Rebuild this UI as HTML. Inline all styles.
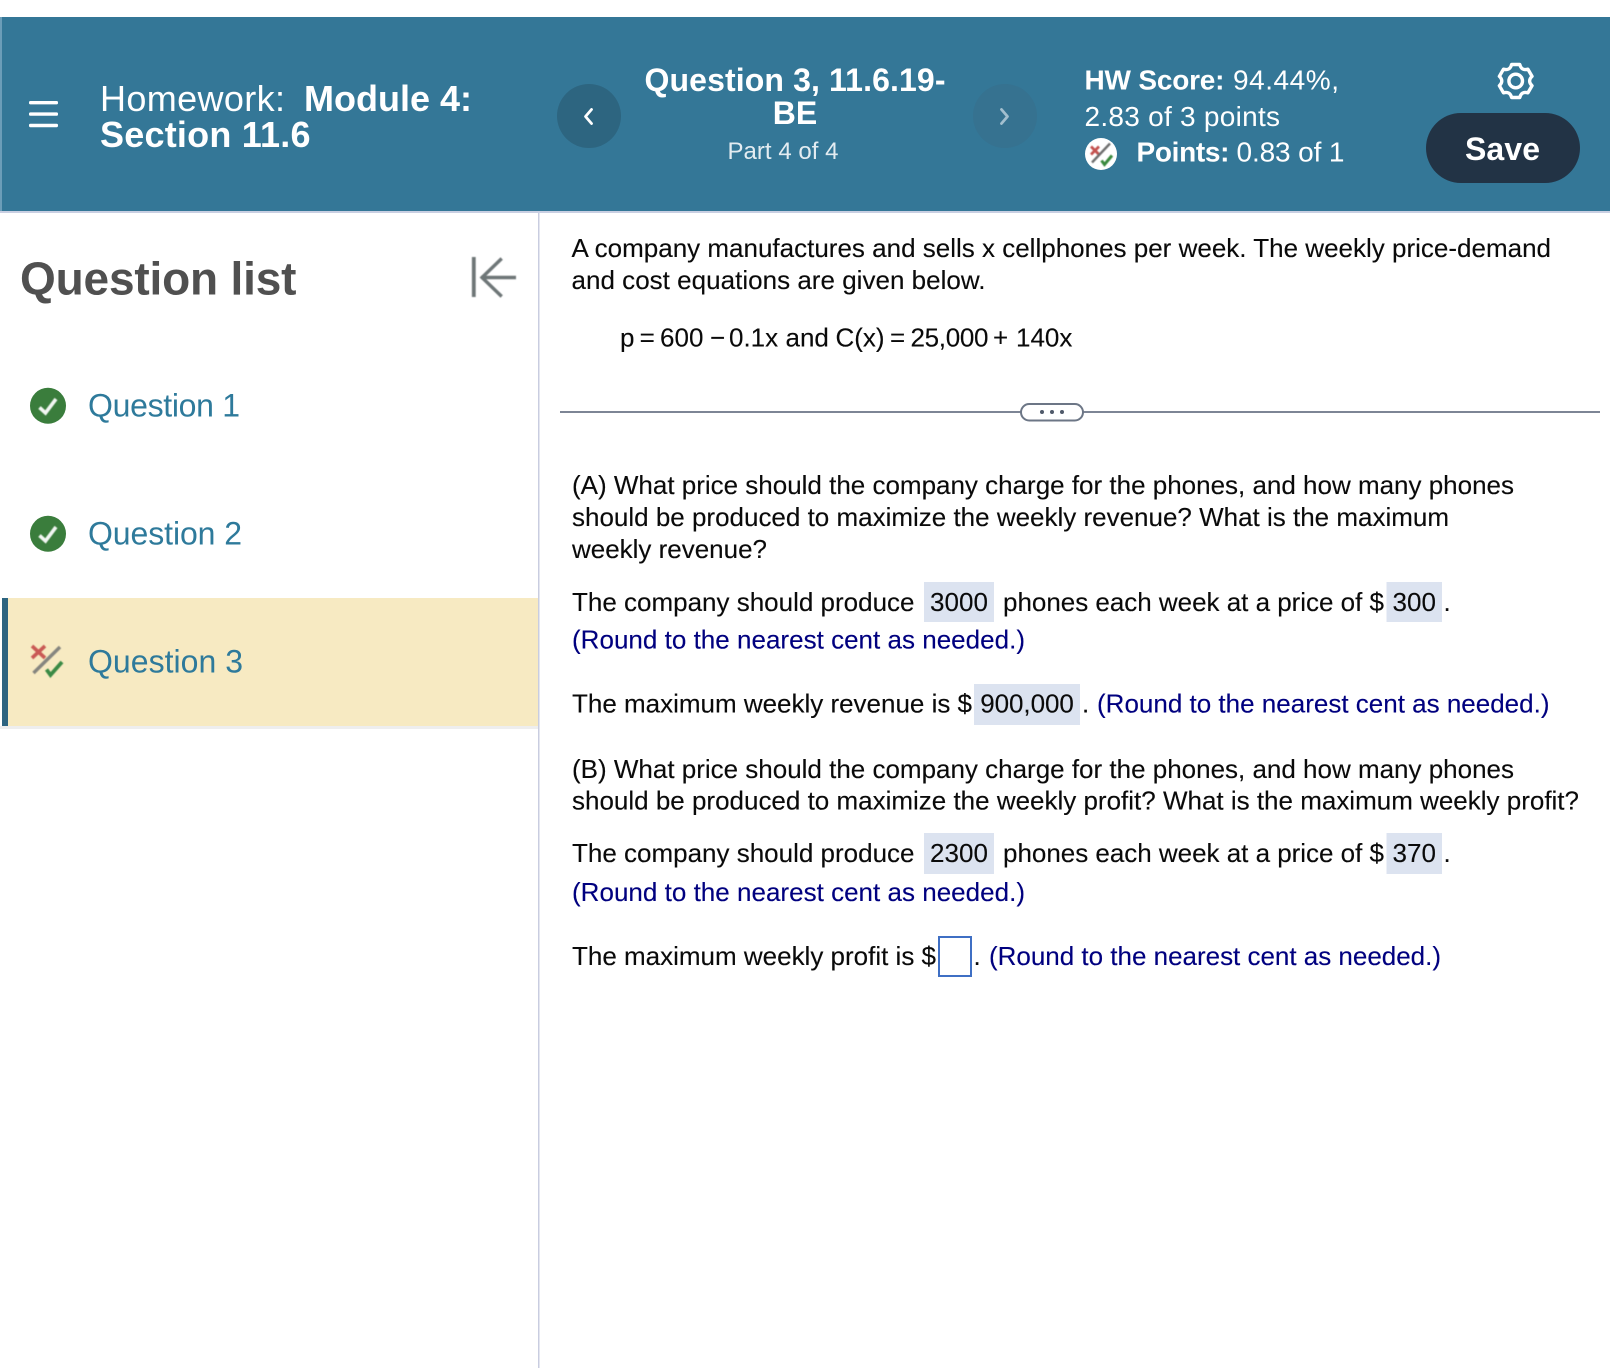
<!DOCTYPE html>
<html lang="en">
<head>
<meta charset="utf-8">
<title>Homework: Module 4: Section 11.6</title>
<style>
html,body{margin:0;padding:0;background:#fff;width:1610px;height:1368px;overflow:hidden}
svg{display:block;position:absolute;left:0;top:0}
text{font-family:"Liberation Sans",Arial,sans-serif;white-space:pre}
.b{font-weight:700}
.h{fill:#fff}
.q{font-size:26px;fill:#0a0a0a;stroke:#0a0a0a;stroke-width:.12}
.n{font-size:26px;fill:#00007f;stroke:#00007f;stroke-width:.12}
.box{fill:#dce3f0}
.l{font-size:32px;fill:#2e7a9b}
.soft{filter:blur(.45px)}
</style>
</head>
<body>
<svg width="1610" height="1368" viewBox="0 0 1610 1368" xmlns="http://www.w3.org/2000/svg">
  <rect width="1610" height="1368" fill="#fff"/>

  <!-- Header -->
  <rect x="0" y="17" width="1610" height="194" fill="#347797"/>
  <rect x="0" y="17" width="2" height="194" fill="#6c9db8"/>
  <rect x="0" y="211" width="1610" height="2" fill="#c9cfe2"/>

  <g fill="#fff">
    <rect x="29" y="101" width="29" height="3.4" rx="1.4"/>
    <rect x="29" y="112.4" width="29" height="3.4" rx="1.4"/>
    <rect x="29" y="123.8" width="29" height="3.4" rx="1.4"/>
  </g>

  <text class="h" x="100" y="111" font-size="36" textLength="185">Homework:</text>
  <text class="h b" x="304" y="111" font-size="36" textLength="168">Module 4:</text>
  <text class="h b" x="100" y="147" font-size="36" textLength="210.5">Section 11.6</text>

  <circle cx="589" cy="116" r="32" fill="#2d6580"/>
  <path d="M591.5 109.5L585.5 116.5L591.5 123.5" fill="none" stroke="#fff" stroke-width="2.8" stroke-linecap="round" stroke-linejoin="round"/>

  <text class="h b" x="644.5" y="91" font-size="32" textLength="301">Question 3, 11.6.19-</text>
  <text class="h b" x="795" y="124" font-size="32" text-anchor="middle">BE</text>
  <text x="727.5" y="159" font-size="24" fill="#e3ecf1" textLength="111">Part 4 of 4</text>

  <circle cx="1005" cy="116" r="32" fill="#367290"/>
  <path d="M1001.5 109.5L1007.5 116.5L1001.5 123.5" fill="none" stroke="#a3bfce" stroke-width="2.8" stroke-linecap="round" stroke-linejoin="round"/>

  <text class="h b" x="1084.5" y="89.5" font-size="28" textLength="140">HW Score:</text>
  <text class="h" x="1233" y="89.5" font-size="28" textLength="106">94.44%,</text>
  <text class="h" x="1084.5" y="126" font-size="28" textLength="195.5">2.83 of 3 points</text>

  <circle cx="1101" cy="154" r="16" fill="#fff"/>
  <g class="soft" fill="none">
    <path d="M1091 146.5l8 8M1099 146.5l-8 8" stroke="#c4524f" stroke-width="2.8"/>
    <path d="M1092 162.5L1110 143.5" stroke="#6f6f6f" stroke-width="2.4"/>
    <path d="M1101.5 160.5L1104.5 164.5L1112 155.5" stroke="#3a8a3e" stroke-width="3"/>
  </g>

  <text class="h b" x="1136.5" y="161.5" font-size="28" textLength="93">Points:</text>
  <text class="h" x="1236.5" y="161.5" font-size="28" textLength="108">0.83 of 1</text>

  <g transform="translate(1515.7 81)" fill="none" stroke="#fff" stroke-width="3.4" stroke-linejoin="round">
    <path d="M-4.11,-16.5 L4.11,-16.5 Q5.75,-9.96 12.23,-11.81 L16.34,-4.69 Q11.5,0 16.34,4.69 L12.23,11.81 Q5.75,9.96 4.11,16.5 L-4.11,16.5 Q-5.75,9.96 -12.23,11.81 L-16.34,4.69 Q-11.5,0 -16.34,-4.69 L-12.23,-11.81 Q-5.75,-9.96 -4.11,-16.5Z"/>
    <circle r="6.8"/>
  </g>

  <rect x="1426" y="113" width="154" height="70" rx="35" fill="#223345"/>
  <text class="h b" x="1465" y="160" font-size="32" textLength="75">Save</text>

  <!-- Sidebar -->
  <rect x="538" y="213" width="1.5" height="1155" fill="#c9cde0"/>
  <text class="b" x="20" y="294.5" font-size="46" fill="#505050" textLength="276.5">Question list</text>
  <g fill="none" stroke="#6e7677" stroke-width="3.4" class="soft">
    <path d="M473.8 257V297" stroke-width="3.8"/>
    <path d="M481 277.5H516"/>
    <path d="M501.7 258.5L482 277.5L501.7 296.5"/>
  </g>

  <circle cx="48" cy="405.8" r="18" fill="#3a7d3c"/>
  <path class="soft" d="M39.5 407.5L45.5 413L56 399" fill="none" stroke="#f2f6f2" stroke-width="3.6"/>
  <text class="l" x="88" y="416.7" textLength="152">Question 1</text>

  <circle cx="48" cy="533.8" r="18" fill="#3a7d3c"/>
  <path class="soft" d="M39.5 535.5L45.5 541L56 527" fill="none" stroke="#f2f6f2" stroke-width="3.6"/>
  <text class="l" x="88" y="544.7" textLength="154">Question 2</text>

  <rect x="0" y="726" width="538" height="3" fill="#eeeeee"/>
  <rect x="2" y="598" width="536" height="128" fill="#f7eac2"/>
  <rect x="2" y="598" width="6" height="128" fill="#2d6480"/>
  <g class="soft" fill="none">
    <path d="M32 646L45 658M45 646L32 658" stroke="#c95a55" stroke-width="3.6"/>
    <path d="M33.5 673L60 647" stroke="#85857f" stroke-width="3.4"/>
    <path d="M46.5 669.5L50.5 675L62 662" stroke="#3a8a45" stroke-width="3.8"/>
  </g>
  <text class="l" x="88" y="672.4" textLength="155">Question 3</text>

  <!-- Content -->
  <text class="q" x="571.5" y="257" textLength="979.5">A company manufactures and sells x cellphones per week. The weekly price-demand</text>
  <text class="q" x="571.5" y="289" textLength="414">and cost equations are given below.</text>
  <text class="q" x="620" y="346.7">p&#8201;=&#8201;600</text>
  <text class="q" x="710" y="346.7">−</text>
  <text class="q" x="729" y="346.7">0.1x</text>
  <text class="q" x="785.5" y="346.7">and</text>
  <text class="q" x="835.5" y="346.7">C(x)</text>
  <text class="q" x="890" y="346.7">=</text>
  <text class="q" x="910.5" y="346.7" textLength="78">25,000</text>
  <text class="q" x="993" y="346.7">+</text>
  <text class="q" x="1016" y="346.7">140x</text>

  <rect x="560" y="411" width="1040" height="2" fill="#7d8595"/>
  <rect x="1021" y="404" width="62" height="16.5" rx="8.25" fill="#fff" stroke="#6c7686" stroke-width="2"/>
  <g fill="#4f5a6a"><circle cx="1042" cy="412" r="2"/><circle cx="1052" cy="412" r="2"/><circle cx="1062" cy="412" r="2"/></g>

  <text class="q" x="572" y="494" textLength="942">(A) What price should the company charge for the phones, and how many phones</text>
  <text class="q" x="572" y="526" textLength="877">should be produced to maximize the weekly revenue? What is the maximum</text>
  <text class="q" x="572" y="558" textLength="195">weekly revenue?</text>

  <rect class="box" x="924" y="582" width="70" height="40"/>
  <rect class="box" x="1386.5" y="582" width="55.5" height="40"/>
  <text class="q" x="572" y="611" textLength="342.5">The company should produce</text>
  <text class="q" x="930" y="611" textLength="58">3000</text>
  <text class="q" x="1003" y="611" textLength="381">phones each week at a price of $</text>
  <text class="q" x="1392.5" y="611" textLength="43.5">300</text>
  <text class="q" x="1443.5" y="611">.</text>
  <text class="n" x="572" y="648.7" textLength="453">(Round to the nearest cent as needed.)</text>

  <rect class="box" x="974" y="684" width="106" height="41"/>
  <text class="q" x="572" y="712.7" textLength="400">The maximum weekly revenue is $</text>
  <text class="q" x="980.3" y="712.7" textLength="93.5">900,000</text>
  <text class="q" x="1082" y="712.7">.</text>
  <text class="n" x="1097" y="712.7" textLength="452.5">(Round to the nearest cent as needed.)</text>

  <text class="q" x="572" y="778" textLength="942">(B) What price should the company charge for the phones, and how many phones</text>
  <text class="q" x="572" y="809.5" textLength="1007">should be produced to maximize the weekly profit? What is the maximum weekly profit?</text>

  <rect class="box" x="924" y="833" width="70" height="41"/>
  <rect class="box" x="1386.5" y="833" width="55.5" height="41"/>
  <text class="q" x="572" y="862" textLength="342.5">The company should produce</text>
  <text class="q" x="930" y="862" textLength="58">2300</text>
  <text class="q" x="1003" y="862" textLength="381">phones each week at a price of $</text>
  <text class="q" x="1392.5" y="862" textLength="43.5">370</text>
  <text class="q" x="1443.5" y="862">.</text>
  <text class="n" x="572" y="901" textLength="453">(Round to the nearest cent as needed.)</text>

  <text class="q" x="572" y="965" textLength="364">The maximum weekly profit is $</text>
  <rect x="939" y="937" width="32" height="39" fill="#fff" stroke="#3f6fc4" stroke-width="2"/>
  <text class="q" x="973.5" y="965">.</text>
  <text class="n" x="989" y="965" textLength="452">(Round to the nearest cent as needed.)</text>
</svg>
</body>
</html>
